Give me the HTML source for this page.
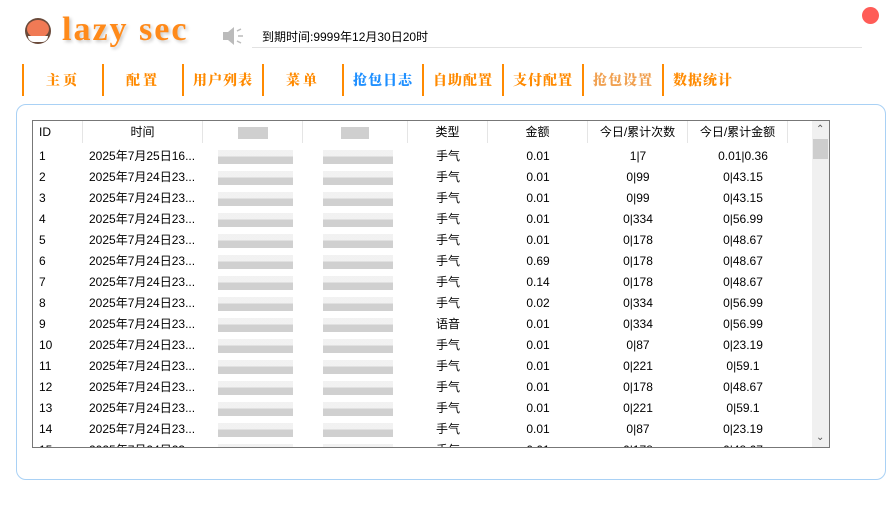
<!DOCTYPE html>
<html><head><meta charset="utf-8"><style>
*{margin:0;padding:0;box-sizing:border-box}
body{width:893px;height:525px;background:#fff;position:relative;overflow:hidden;font-family:"Liberation Sans","Noto Sans CJK SC",sans-serif;color:#000}
.abs{position:absolute}
.nav{position:absolute;top:64px;height:32px;width:80px;border-left:2px solid #ff8a00;font-family:"Noto Serif CJK SC","Liberation Serif",serif;font-weight:900;font-size:14px;color:#ff8a00;line-height:32px;text-align:center;letter-spacing:3px}
.panel{left:16px;top:104px;width:870px;height:376px;border:1px solid #a9d1f5;border-radius:10px}
.tbl{left:32px;top:120px;width:798px;height:328px;border:1px solid #777;overflow:hidden;font-size:12px}
.hd{position:absolute;top:0;height:22px;line-height:22px;text-align:center;border-right:1px solid #e5e5e5}
.row{position:absolute;left:0;height:21px;line-height:21px;width:780px}
.c{position:absolute;top:0}
.blur{position:absolute;height:14px;top:4px;background:linear-gradient(#eeeeee 0 45%,#c4c4c4 45% 100%);opacity:.8}
.sb{position:absolute;right:0;top:0;width:17px;height:100%;background:#f0f0f0}
</style></head><body>
<div class="abs" style="left:25px;top:18px;width:26px;height:26px;border-radius:50%;background:#6a4a3a"></div>
<div class="abs" style="left:27px;top:20px;width:22px;height:18px;border-radius:50%;background:#f07a55"></div>
<div class="abs" style="left:28px;top:36px;width:20px;height:6px;border-radius:0 0 10px 10px;background:#fff"></div>
<div class="abs" style="left:62px;top:11px;font-family:'Liberation Serif',serif;font-weight:bold;font-size:34px;letter-spacing:2px;color:#ff8a1a;text-shadow:2px 2px 3px #ccc">lazy sec</div>
<svg class="abs" style="left:222px;top:26px" width="24" height="20"><path d="M1 6h5l6-5v18l-6-5H1z" fill="#bbb"/><path d="M15 5l4-2M16 10h5M15 15l4 2" stroke="#bbb" stroke-width="1.5"/></svg>
<div class="abs" style="left:262px;top:28px;font-size:12px">到期时间:9999年12月30日20时</div>
<div class="abs" style="left:252px;top:47px;width:610px;height:1px;background:#e2e2e2"></div>
<div class="abs" style="left:862px;top:7px;width:17px;height:17px;border-radius:50%;background:#ff5c57"></div>
<div class="nav" style="left:22px">主页</div>
<div class="nav" style="left:102px">配置</div>
<div class="nav" style="left:182px;letter-spacing:1px">用户列表</div>
<div class="nav" style="left:262px">菜单</div>
<div class="nav" style="left:342px;color:#1e8fff;letter-spacing:1px">抢包日志</div>
<div class="nav" style="left:422px;letter-spacing:1px">自助配置</div>
<div class="nav" style="left:502px;letter-spacing:1px">支付配置</div>
<div class="nav" style="left:582px;color:#f0a050;letter-spacing:1px">抢包设置</div>
<div class="nav" style="left:662px;letter-spacing:1px">数据统计</div>
<div class="abs panel"></div>
<div class="abs tbl" id="t">
<div class="hd" style="left:0;width:50px;text-align:left;padding-left:6px">ID</div>
<div class="hd" style="left:50px;width:120px">时间</div>
<div class="hd" style="left:170px;width:100px"><span style="display:inline-block;width:30px;height:12px;vertical-align:middle;background:#bbb;opacity:.7"></span></div>
<div class="hd" style="left:270px;width:105px"><span style="display:inline-block;width:28px;height:12px;vertical-align:middle;background:#bbb;opacity:.7"></span></div>
<div class="hd" style="left:375px;width:80px">类型</div>
<div class="hd" style="left:455px;width:100px">金额</div>
<div class="hd" style="left:555px;width:100px">今日/累计次数</div>
<div class="hd" style="left:655px;width:100px">今日/累计金额</div>
<div class="sb"><div style="position:absolute;top:3px;left:4px;font-size:10px;color:#555">&#8963;</div><div style="position:absolute;top:18px;left:1px;width:15px;height:20px;background:#cdcdcd"></div><div style="position:absolute;bottom:4px;left:4px;font-size:10px;color:#555">&#8964;</div></div>
</div>
<script>
var d=[["1","2025年7月25日16...","手气","0.01","1|7","0.01|0.36"],["2","","手气","0.01","0|99","0|43.15"],["3","","手气","0.01","0|99","0|43.15"],["4","","手气","0.01","0|334","0|56.99"],["5","","手气","0.01","0|178","0|48.67"],["6","","手气","0.69","0|178","0|48.67"],["7","","手气","0.14","0|178","0|48.67"],["8","","手气","0.02","0|334","0|56.99"],["9","","语音","0.01","0|334","0|56.99"],["10","","手气","0.01","0|87","0|23.19"],["11","","手气","0.01","0|221","0|59.1"],["12","","手气","0.01","0|178","0|48.67"],["13","","手气","0.01","0|221","0|59.1"],["14","","手气","0.01","0|87","0|23.19"],["15","","手气","0.01","0|178","0|48.67"]];
var h="";d.forEach(function(r,i){var t=r[1]||"2025年7月24日23...";h+='<div class="row" style="top:'+(25+i*21)+'px"><div class="c" style="left:6px">'+r[0]+'</div><div class="c" style="left:56px">'+t+'</div><div class="blur" style="left:185px;width:75px"></div><div class="blur" style="left:290px;width:70px"></div><div class="c" style="left:403px">'+r[2]+'</div><div class="c" style="left:455px;width:100px;text-align:center">'+r[3]+'</div><div class="c" style="left:555px;width:100px;text-align:center">'+r[4]+'</div><div class="c" style="left:660px;width:100px;text-align:center">'+r[5]+'</div></div>';});
document.getElementById("t").insertAdjacentHTML("afterbegin",h);
</script>
</body></html>
